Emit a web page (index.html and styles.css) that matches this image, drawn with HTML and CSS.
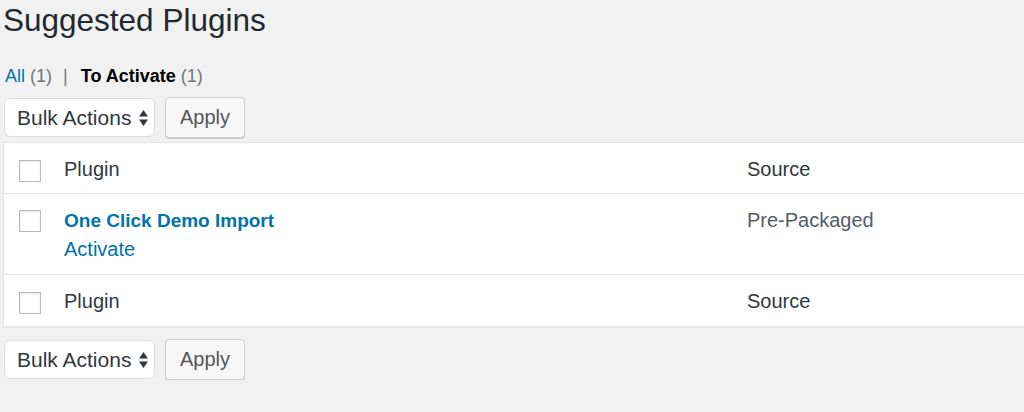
FILE: index.html
```html
<!DOCTYPE html>
<html lang="en">
<head>
<meta charset="UTF-8">
<title>Suggested Plugins</title>
<link rel="stylesheet" href="styles.css">
</head>
<body>

<div class="wrap">
    <h1>Suggested Plugins</h1>

    <ul class="subsubsub">
        <li><a href="#">All</a> <span class="count">(1)</span><span class="sep">|</span></li>
        <li class="current">To Activate <span class="count">(1)</span></li>
    </ul>

    <div class="tablenav top">
        <div class="bulk-select">
            <span>Bulk Actions</span>
            <svg width="9" height="16" viewBox="0 0 9 16"><path d="M4.5 0 L9 6.5 L0 6.5 Z M0 9.5 L9 9.5 L4.5 16 Z" fill="#32373c"/></svg>
        </div>
        <button class="button">Apply</button>
    </div>

    <table class="plugins">
        <colgroup>
            <col class="col-cb">
            <col class="col-plugin">
            <col>
        </colgroup>
        <thead>
            <tr>
                <td class="cb"><span class="checkbox"></span></td>
                <th>Plugin</th>
                <th>Source</th>
            </tr>
        </thead>
        <tbody>
            <tr>
                <td class="cb"><span class="checkbox"></span></td>
                <td>
                    <a class="plugin-name" href="#">One Click Demo Import</a>
                    <div class="row-actions"><a href="#">Activate</a></div>
                </td>
                <td class="source">Pre-Packaged</td>
            </tr>
        </tbody>
        <tfoot>
            <tr>
                <td class="cb"><span class="checkbox"></span></td>
                <th>Plugin</th>
                <th>Source</th>
            </tr>
        </tfoot>
    </table>

    <div class="tablenav bottom">
        <div class="bulk-select">
            <span>Bulk Actions</span>
            <svg width="9" height="16" viewBox="0 0 9 16"><path d="M4.5 0 L9 6.5 L0 6.5 Z M0 9.5 L9 9.5 L4.5 16 Z" fill="#32373c"/></svg>
        </div>
        <button class="button">Apply</button>
    </div>
</div>

</body>
</html>
```

FILE: styles.css
```css
html, body {
    margin: 0;
    padding: 0;
    background-color: #f1f1f1;
    overflow: hidden;
}
body {
    font-family: "Liberation Sans", Arial, sans-serif;
    color: #23282d;
}
.wrap {
    padding-left: 3px;
}
a {
    color: #0073aa;
    text-decoration: none;
}
h1 {
    margin: 0;
    font-size: 31.5px;
    font-weight: 400;
    line-height: 40px;
    color: #23282d;
}
.subsubsub {
    list-style: none;
    margin: 24px 0 0 2px;
    padding: 0;
    display: flex;
    font-size: 18px;
    line-height: 24px;
}
.subsubsub .count {
    color: #72777c;
    font-weight: 400;
}
.subsubsub .sep {
    color: #72777c;
    margin: 0 13px 0 11px;
}
.subsubsub .current {
    font-weight: 700;
    color: #000;
}
.tablenav {
    display: flex;
    align-items: center;
    gap: 10px;
    height: 41px;
    padding-left: 1px;
}
.tablenav.top {
    margin: 9px 0 4px;
}
.tablenav.bottom {
    margin-top: 12px;
}
.bulk-select {
    box-sizing: border-box;
    width: 151px;
    height: 39px;
    display: flex;
    align-items: center;
    justify-content: space-between;
    padding: 0 6px 0 12px;
    background-color: #fff;
    border: 1px solid #ddd;
    border-radius: 6px;
    font-size: 21px;
    color: #32373c;
}
.button {
    box-sizing: border-box;
    width: 80px;
    height: 41px;
    padding: 0;
    font-family: inherit;
    font-size: 20px;
    color: #555;
    background-color: #f7f7f7;
    border: 1px solid #ccc;
    border-radius: 4px;
    box-shadow: 0 1px 0 #ccc;
}
.plugins {
    width: 1060px;
    table-layout: fixed;
    border-spacing: 0;
    background-color: #fff;
    border: 1px solid #e5e5e5;
    box-shadow: 0 1px 1px rgba(0, 0, 0, 0.04);
    font-size: 20px;
}
.col-cb {
    width: 50px;
}
.col-plugin {
    width: 683px;
}
.plugins th, .plugins td {
    text-align: left;
    font-weight: 400;
    padding: 0 10px;
    vertical-align: top;
}
.plugins thead th, .plugins tfoot th {
    padding-top: 14px;
    padding-bottom: 12px;
    line-height: 24px;
    color: #32373c;
}
.plugins thead th, .plugins thead td {
    border-bottom: 1px solid #e1e1e1;
}
.plugins tfoot th, .plugins tfoot td {
    border-top: 1px solid #e1e1e1;
}
.plugins tfoot th {
    padding-bottom: 13px;
}
.plugins tbody td {
    padding-top: 12px;
    padding-bottom: 10px;
    line-height: 29px;
}
.plugins td.cb {
    padding: 17px 0 0 15px;
    line-height: 0;
}
.plugins tbody td.cb {
    padding-top: 16px;
}
.checkbox {
    display: block;
    box-sizing: border-box;
    width: 22px;
    height: 22px;
    border: 1px solid #b4b9be;
    background-color: #fff;
    box-shadow: inset 0 1px 2px rgba(0, 0, 0, 0.1);
}
.plugin-name {
    font-size: 19px;
    font-weight: 700;
}
.source {
    color: #555d66;
}
```
